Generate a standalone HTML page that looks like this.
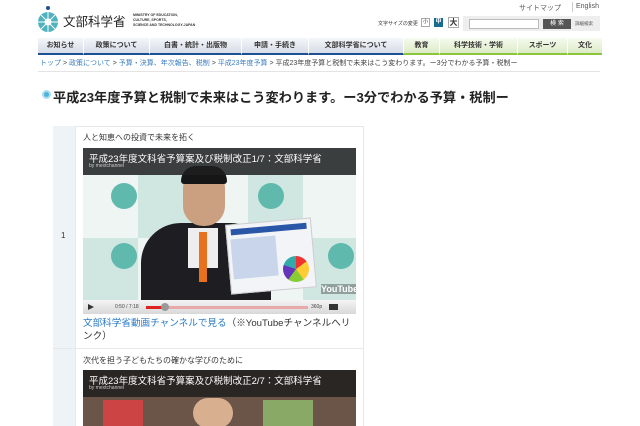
<!DOCTYPE html>
<html><head><meta charset="utf-8"><style>
*{margin:0;padding:0;box-sizing:border-box}
body{width:640px;height:426px;overflow:hidden;background:#fff;font-family:"Liberation Sans","Noto Sans CJK JP",sans-serif;color:#333;position:relative}
.a{position:absolute}
.nav div{position:absolute;top:38px;height:17px;font-size:7px;font-weight:bold;text-align:center;line-height:16px;border-right:1px solid #fff}
.b{background:linear-gradient(#f4f6f9,#d6dde7);border-bottom:2px solid #1e4f92}
.g{background:linear-gradient(#f6fbef,#dcebc6);border-bottom:2px solid #8cc63f}
</style></head><body>
<svg class="a" style="left:37px;top:5px" width="22" height="28" viewBox="0 0 22 28"><circle cx="11" cy="3" r="2" fill="#1e4f92"/><circle cx="11" cy="17" r="10" fill="#4fb3bf"/><circle cx="11" cy="17" r="3.5" fill="#fff"/><g stroke="#fff" stroke-width="1"><line x1="11" y1="7" x2="11" y2="27"/><line x1="1" y1="17" x2="21" y2="17"/><line x1="4" y1="10" x2="18" y2="24"/><line x1="18" y1="10" x2="4" y2="24"/></g></svg>
<div class="a" style="left:63px;top:11px;font-size:12.5px;color:#222;white-space:nowrap">文部科学省</div>
<div class="a" style="left:133px;top:13px;font-size:3.5px;line-height:5px;color:#333;font-weight:bold;white-space:nowrap">MINISTRY OF EDUCATION,<br>CULTURE, SPORTS,<br>SCIENCE AND TECHNOLOGY-JAPAN</div>
<div class="a" style="left:519px;top:3px;font-size:7px;color:#555">サイトマップ</div>
<div class="a" style="left:572px;top:2px;width:1px;height:10px;background:#ccc"></div>
<div class="a" style="left:576px;top:3px;font-size:7px;color:#555">English</div>
<div class="a" style="left:378px;top:20px;font-size:5px;color:#333">文字サイズの変更</div>
<div class="a" style="left:421px;top:18px;width:9px;height:9px;border:1px solid #aaa;font-size:5px;text-align:center;line-height:7px">小</div>
<div class="a" style="left:434px;top:18px;width:9px;height:9px;background:#1a6b8f;color:#fff;font-size:6px;text-align:center;line-height:9px;font-weight:bold">中</div>
<div class="a" style="left:448px;top:17px;width:11px;height:11px;border:1px solid #aaa;font-size:8px;text-align:center;line-height:9px;font-weight:bold">大</div>
<div class="a" style="left:463px;top:16px;width:137px;height:15px;background:#eee"></div>
<div class="a" style="left:469px;top:19px;width:70px;height:10px;border:1px solid #bbb;background:#fff"></div>
<div class="a" style="left:543px;top:19px;width:28px;height:10px;background:#555;color:#fff;font-size:6px;text-align:center;line-height:10px">検 索</div>
<div class="a" style="left:575px;top:21px;font-size:4.5px;color:#555">詳細検索</div>
<div class="nav">
<div class="b" style="left:38px;width:46px">お知らせ</div>
<div class="b" style="left:84px;width:66px">政策について</div>
<div class="b" style="left:150px;width:92px">白書・統計・出版物</div>
<div class="b" style="left:242px;width:67px">申請・手続き</div>
<div class="b" style="left:309px;width:95px">文部科学省について</div>
<div class="g" style="left:404px;width:36px">教育</div>
<div class="g" style="left:440px;width:78px">科学技術・学術</div>
<div class="g" style="left:518px;width:50px">スポーツ</div>
<div class="g" style="left:568px;width:34px;border-right:0">文化</div>
</div>
<div class="a" style="left:40px;top:58px;font-size:7px;white-space:nowrap;color:#444"><span style="color:#3a7dc0">トップ</span> &gt; <span style="color:#3a7dc0">政策について</span> &gt; <span style="color:#3a7dc0">予算・決算、年次報告、税制</span> &gt; <span style="color:#3a7dc0">平成23年度予算</span> &gt; 平成23年度予算と税制で未来はこう変わります。ー3分でわかる予算・税制ー</div>
<div class="a" style="left:38px;top:71px;width:562px;height:1px;background:#e4e4e4"></div>
<div class="a" style="left:42px;top:90px;width:9px;height:9px;border-radius:50%;background:#4fb3d9;border:2px solid #a8def0"></div>
<div class="a" style="left:53px;top:87px;font-size:13.2px;font-weight:bold;color:#222;white-space:nowrap">平成23年度予算と税制で未来はこう変わります。ー3分でわかる予算・税制ー</div>
<div class="a" style="left:53px;top:126px;width:311px;height:300px;border:1px solid #e6e8ea;border-bottom:0"></div>
<div class="a" style="left:53px;top:126px;width:23px;height:300px;background:#eef3f8;border-right:1px solid #e6e8ea"></div>
<div class="a" style="left:53px;top:348px;width:311px;height:1px;background:#e6e8ea"></div>
<div class="a" style="left:61px;top:231px;font-size:8px">1</div>
<div class="a" style="left:83px;top:132px;font-size:8px;color:#333">人と知恵への投資で未来を拓く</div>
<div class="a" style="left:83px;top:148px;width:273px;height:166px;background:#dfeeed;overflow:hidden">
 <div class="a" style="left:0;top:27px;width:273px;height:125px;background:repeating-linear-gradient(90deg,#eef5f3 0 55px,#cfe6e1 55px 110px)"></div>
 <div class="a" style="left:0;top:90px;width:273px;height:62px;background:repeating-linear-gradient(90deg,#cfe6e1 0 55px,#eef5f3 55px 110px)"></div>
 <div class="a" style="left:28px;top:35px;width:26px;height:26px;border-radius:50%;background:#5fb9ad"></div>
 <div class="a" style="left:175px;top:35px;width:26px;height:26px;border-radius:50%;background:#5fb9ad"></div>
 <div class="a" style="left:28px;top:95px;width:26px;height:26px;border-radius:50%;background:#5fb9ad"></div>
 <div class="a" style="left:245px;top:95px;width:26px;height:26px;border-radius:50%;background:#5fb9ad"></div>
 <div class="a" style="left:58px;top:75px;width:130px;height:80px;border-radius:40px 40px 0 0;background:#1e1e22"></div>
 <div class="a" style="left:105px;top:80px;width:30px;height:40px;background:#eee"></div>
 <div class="a" style="left:116px;top:84px;width:8px;height:50px;background:#e8711e"></div>
 <div class="a" style="left:100px;top:20px;width:42px;height:58px;border-radius:20px;background:#caa080"></div>
 <div class="a" style="left:98px;top:18px;width:46px;height:18px;border-radius:20px 20px 4px 4px;background:#161616"></div>
 <div class="a" style="left:145px;top:73px;width:86px;height:70px;background:#f2f4f8;transform:rotate(-5deg);border:1px solid #ccc"><div style="margin:4px;height:6px;background:#2a56a8"></div><div style="margin:3px;height:40px;width:45px;background:#c9d5ea"></div></div>
 <div class="a" style="left:200px;top:108px;width:26px;height:26px;border-radius:50%;background:conic-gradient(#e33 0 15%,#fc3 15% 40%,#8c3 40% 60%,#63b 60% 80%,#3aa 80%)"></div>
 <div class="a" style="left:0;top:0;width:273px;height:27px;background:rgba(30,30,30,.85)"></div>
 <div class="a" style="left:6px;top:3px;font-size:9.5px;color:#fff;white-space:nowrap">平成23年度文科省予算案及び税制改正1/7：文部科学省</div>
 <div class="a" style="left:6px;top:15px;font-size:5px;color:#ccc">by mextchannel</div>
 <div class="a" style="left:238px;top:136px;font-size:9px;font-weight:bold;color:#fff;background:rgba(0,0,0,.3)">YouTube</div>
 <div class="a" style="left:0;top:152px;width:273px;height:14px;background:linear-gradient(#f4f4f4,#d8d8d8)"></div>
 <div class="a" style="left:5px;top:156px;width:0;height:0;border-left:6px solid #333;border-top:3.5px solid transparent;border-bottom:3.5px solid transparent"></div>
 <div class="a" style="left:32px;top:156px;font-size:5px;color:#444">0:50 / 7:18</div>
 <div class="a" style="left:63px;top:158px;width:162px;height:3px;background:#e7a9a9"></div>
 <div class="a" style="left:63px;top:158px;width:18px;height:3px;background:#d22"></div>
 <div class="a" style="left:78px;top:155px;width:8px;height:8px;border-radius:50%;background:#999"></div>
 <div class="a" style="left:228px;top:156px;font-size:5px;color:#444">360p</div>
 <div class="a" style="left:246px;top:156px;width:9px;height:6px;background:#333"></div>
</div>
<div class="a" style="left:83px;top:317px;width:275px;font-size:9.6px;line-height:13px"><span style="color:#2b7bc4">文部科学省動画チャンネルで見る</span>（※YouTubeチャンネルへリンク）</div>
<div class="a" style="left:83px;top:355px;font-size:8px;color:#333">次代を担う子どもたちの確かな学びのために</div>
<div class="a" style="left:83px;top:370px;width:273px;height:56px;background:#6a5548;overflow:hidden">
 <div class="a" style="left:20px;top:30px;width:40px;height:30px;background:#c44"></div>
 <div class="a" style="left:110px;top:28px;width:40px;height:30px;background:#d8b090;border-radius:20px"></div>
 <div class="a" style="left:180px;top:30px;width:50px;height:30px;background:#8a6"></div>
 <div class="a" style="left:0;top:0;width:273px;height:27px;background:rgba(30,30,30,.85)"></div>
 <div class="a" style="left:6px;top:3px;font-size:9.5px;color:#fff;white-space:nowrap">平成23年度文科省予算案及び税制改正2/7：文部科学省</div>
 <div class="a" style="left:6px;top:15px;font-size:5px;color:#ccc">by mextchannel</div>
</div>
</body></html>
